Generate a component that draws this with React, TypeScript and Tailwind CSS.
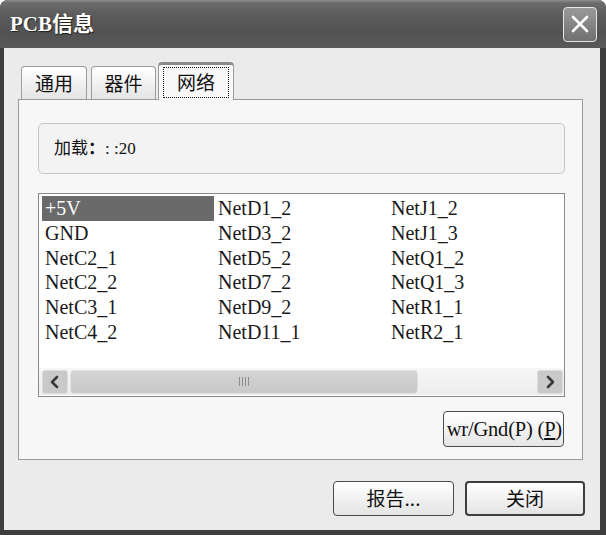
import React from "react";

const serif = '"Liberation Serif", "Noto Sans CJK SC", serif';
const cjk = '"Noto Sans CJK SC", "Liberation Sans", sans-serif';

function Chevron({ dir }: { dir: "left" | "right" }) {
  return (
    <svg width="12" height="14" viewBox="0 0 12 14">
      {dir === "left" ? (
        <polyline points="8,2 3,7 8,12" fill="none" stroke="#3a3a3a" strokeWidth="2.6" strokeLinecap="round" strokeLinejoin="round" />
      ) : (
        <polyline points="4,2 9,7 4,12" fill="none" stroke="#3a3a3a" strokeWidth="2.6" strokeLinecap="round" strokeLinejoin="round" />
      )}
    </svg>
  );
}

export default function App() {
  const cols = [
    ["+5V", "GND", "NetC2_1", "NetC2_2", "NetC3_1", "NetC4_2"],
    ["NetD1_2", "NetD3_2", "NetD5_2", "NetD7_2", "NetD9_2", "NetD11_1"],
    ["NetJ1_2", "NetJ1_3", "NetQ1_2", "NetQ1_3", "NetR1_1", "NetR2_1"],
  ];

  return (
    <div className="w-[606px] h-[535px] bg-[#3e3e3e] rounded-t-[8px] overflow-hidden flex flex-col">
      {/* Title bar */}
      <div className="h-[48px] shrink-0 flex items-center justify-between pl-[10px] pr-[9px] bg-[linear-gradient(to_bottom,#8e8e8e_0%,#6c6c6c_6%,#5c5c5c_30%,#525252_70%,#5a5a5a_100%)]">
        <div
          className="text-white font-bold text-[21px] pt-[2px] [text-shadow:1px_1px_1px_#1e1e1e]"
          style={{ fontFamily: serif }}
        >
          PCB信息
        </div>
        <div className="w-[34px] h-[35px] rounded-[4px] border-[1.5px] border-[#e6e6e6] bg-[linear-gradient(to_bottom,#9a9a9a,#707070)] flex items-center justify-center">
          <svg width="20" height="20" viewBox="0 0 20 20">
            <line x1="3" y1="3" x2="17" y2="17" stroke="#ffffff" strokeWidth="2.6" strokeLinecap="round" />
            <line x1="17" y1="3" x2="3" y2="17" stroke="#ffffff" strokeWidth="2.6" strokeLinecap="round" />
          </svg>
        </div>
      </div>

      {/* Body */}
      <div className="flex-1 flex flex-col bg-[#ebebeb] ml-[4px] mr-[6px] mb-[5px]">
        {/* Tabs */}
        <div className="h-[51px] pt-[14px] pl-[17px] flex items-end">
          <div
            className="w-[66px] h-[33px] border border-b-0 border-[#9c9c9c] rounded-t-[4px] bg-[linear-gradient(to_bottom,#ffffff,#e4e4e4)] flex items-center justify-center text-[19px] text-[#111]"
            style={{ fontFamily: cjk }}
          >
            通用
          </div>
          <div
            className="ml-[4px] w-[65px] h-[33px] border border-b-0 border-[#9c9c9c] rounded-t-[4px] bg-[linear-gradient(to_bottom,#ffffff,#e4e4e4)] flex items-center justify-center text-[19px] text-[#111]"
            style={{ fontFamily: cjk }}
          >
            器件
          </div>
          <div className="relative z-10 ml-[2px] w-[76px] h-[38px] -mb-px bg-[#f8f8f8] border border-b-0 border-[#9c9c9c] border-t-[3px] border-t-[#8a8a8a] rounded-t-[4px] flex flex-col px-[4px] pt-[2px] pb-[2px]">
            <div
              className="flex-1 border border-dotted border-[#111] flex items-center justify-center text-[19px] text-[#111]"
              style={{ fontFamily: cjk }}
            >
              网络
            </div>
          </div>
        </div>

        {/* Panel */}
        <div className="ml-[14px] mr-[17px] h-[361px] border border-[#9a9a9a] bg-[#f7f7f7] pl-[19px] pr-[17px] pt-[23px] flex flex-col">
          <div
            className="h-[51px] border border-[#c6c6c6] rounded-[5px] bg-[#f3f3f3] flex items-center pl-[15px] text-[17px] text-[#111]"
            style={{ fontFamily: serif }}
          >
            加载<span className="font-bold">：</span>: :20
          </div>

          <div className="mt-[19px] h-[204px] border border-[#8a8a8a] bg-white flex flex-col">
            <div className="flex pt-[2px] pl-[3px]" style={{ fontFamily: serif }}>
              {cols.map((col, ci) => (
                <div key={ci} className="w-[173px] flex flex-col">
                  {col.map((item, ri) => (
                    <div
                      key={item}
                      className={
                        ci === 0 && ri === 0
                          ? "h-[24.8px] leading-[24.8px] px-[3px] mr-[1px] text-[20px] bg-[#6a6a6a] text-white"
                          : "h-[24.8px] leading-[24.8px] px-[3px] text-[20px] text-[#1a1a1a]"
                      }
                    >
                      {item}
                    </div>
                  ))}
                </div>
              ))}
            </div>

            {/* Scrollbar */}
            <div className="mt-auto mb-[1px] h-[27px] pl-[3px] pr-[1px] flex items-center bg-[linear-gradient(to_bottom,#f7f7f7,#ededed)]">
              <div className="w-[26px] h-[24px] rounded-[3px] bg-[#c9c9c9] border border-[#dcdcdc] flex items-center justify-center">
                <Chevron dir="left" />
              </div>
              <div className="ml-[2px] w-[348px] h-[24px] rounded-[4px] bg-[linear-gradient(to_bottom,#d4d4d4,#c8c8c8)] border border-[#e2e2e2] flex items-center justify-center gap-[2px]">
                <div className="w-px h-[9px] bg-[#8f8f8f]" />
                <div className="w-px h-[9px] bg-[#8f8f8f]" />
                <div className="w-px h-[9px] bg-[#8f8f8f]" />
                <div className="w-px h-[9px] bg-[#8f8f8f]" />
              </div>
              <div className="flex-1" />
              <div className="w-[26px] h-[24px] rounded-[3px] bg-[#c9c9c9] border border-[#dcdcdc] flex items-center justify-center">
                <Chevron dir="right" />
              </div>
            </div>
          </div>

          <div className="mt-[14px] self-end mr-[1px] w-[121px] h-[36px] rounded-[4px] border border-[#4e4e4e] bg-[linear-gradient(to_bottom,#ffffff,#e6e6e6)] flex items-center justify-end pr-[1px]">
            <span className="whitespace-nowrap text-[20.5px] tracking-[-0.2px] text-[#111]" style={{ fontFamily: serif }}>
              wr/Gnd(P) (<span className="underline">P</span>)
            </span>
          </div>
        </div>

        {/* Bottom buttons */}
        <div className="mt-[21px] flex justify-end gap-[11px] pr-[15px]">
          <div
            className="w-[121px] h-[35px] rounded-[4px] border border-[#4a4a4a] bg-[linear-gradient(to_bottom,#ffffff,#e4e4e4)] flex items-center justify-center text-[19px] text-[#111]"
            style={{ fontFamily: cjk }}
          >
            报告...
          </div>
          <div
            className="w-[120px] h-[35px] rounded-[4px] border-2 border-[#3e3e3e] bg-[linear-gradient(to_bottom,#ffffff,#e4e4e4)] flex items-center justify-center text-[19px] text-[#111]"
            style={{ fontFamily: cjk }}
          >
            关闭
          </div>
        </div>
      </div>
    </div>
  );
}
